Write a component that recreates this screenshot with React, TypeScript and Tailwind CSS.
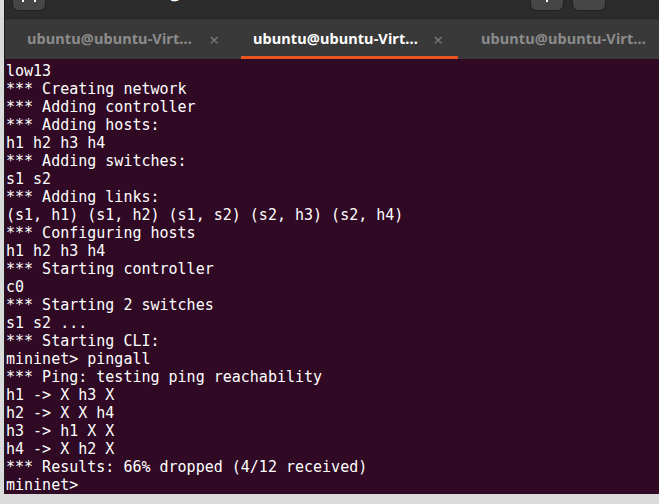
const lines = [
  "low13",
  "*** Creating network",
  "*** Adding controller",
  "*** Adding hosts:",
  "h1 h2 h3 h4",
  "*** Adding switches:",
  "s1 s2",
  "*** Adding links:",
  "(s1, h1) (s1, h2) (s1, s2) (s2, h3) (s2, h4)",
  "*** Configuring hosts",
  "h1 h2 h3 h4",
  "*** Starting controller",
  "c0",
  "*** Starting 2 switches",
  "s1 s2 ...",
  "*** Starting CLI:",
  "mininet> pingall",
  "*** Ping: testing ping reachability",
  "h1 -> X h3 X",
  "h2 -> X X h4",
  "h3 -> h1 X X",
  "h4 -> X h2 X",
  "*** Results: 66% dropped (4/12 received)",
  "mininet>",
];

function Tab({ active, close = true, className }: { active?: boolean; close?: boolean; className: string }) {
  return (
    <div className={`relative h-full flex items-center shrink-0 ${className}`}>
      <span
        className={`text-[14.5px] font-bold tracking-[0.1px] whitespace-nowrap ${active ? "text-white" : "text-[#8c8c8c]"}`}
        style={{ fontFamily: '"Noto Sans", "Open Sans", sans-serif' }}
      >
        ubuntu@ubuntu-Virt...
      </span>
      {close && <span className="ml-auto text-[17px] text-[#7a7a7a] leading-none">×</span>}
      {active && <div className="absolute left-0 right-0 bottom-0 h-[3px] bg-[#e95420]" />}
    </div>
  );
}

export default function App() {
  return (
    <div className="w-[659px] h-[504px] bg-[#dadada] pl-[4px] pb-[10px] overflow-hidden">
      <div className="h-full flex flex-col border-l border-[#1c1c1c] overflow-hidden">
        <div className="h-[19px] bg-[#2c2c2c] border-b border-[#242424] flex relative overflow-hidden">
          <div className="ml-[7px] w-[34px] h-[11px] bg-[#464646] rounded-b-md border border-t-0 border-[#1f1f1f] flex justify-center gap-[10px]">
            <div className="w-[2px] h-[2px] bg-white" />
            <div className="w-[2px] h-[2px] bg-white" />
          </div>
          <div className="flex-1 flex justify-center overflow-hidden">
            <div
              className="mt-[-17px] text-[15px] leading-[22px] font-bold text-white whitespace-nowrap"
              style={{ fontFamily: '"Noto Sans", sans-serif' }}
            >
              ubuntu@ubuntu-VirtualBox: ~/mininet/custom
            </div>
          </div>
          <div className="mr-[53px] flex gap-[8px]">
            <div className="w-[34px] h-[11px] bg-[#464646] rounded-b-md border border-t-0 border-[#1f1f1f] flex justify-center">
              <div className="w-[2px] h-[2px] bg-white" />
            </div>
            <div className="w-[34px] h-[11px] bg-[#464646] rounded-b-md border border-t-0 border-[#1f1f1f]" />
          </div>
        </div>
        <div className="h-[40px] bg-[#393939] flex">
          <Tab className="ml-[22px] w-[214px] pr-[22px]" />
          <Tab active className="ml-[0px] w-[217px] pl-[12px] pr-[15px]" />
          <Tab close={false} className="pl-[23px] w-[220px]" />
        </div>
        <div
          className="flex-1 bg-[#300a24] text-white pl-[1px] pt-[3px] text-[15px] leading-[18px] whitespace-pre"
          style={{ fontFamily: '"DejaVu Sans Mono", "Liberation Mono", monospace' }}
        >
          {lines.map((l, i) => (
            <div key={i}>{l}</div>
          ))}
        </div>
      </div>
    </div>
  );
}
